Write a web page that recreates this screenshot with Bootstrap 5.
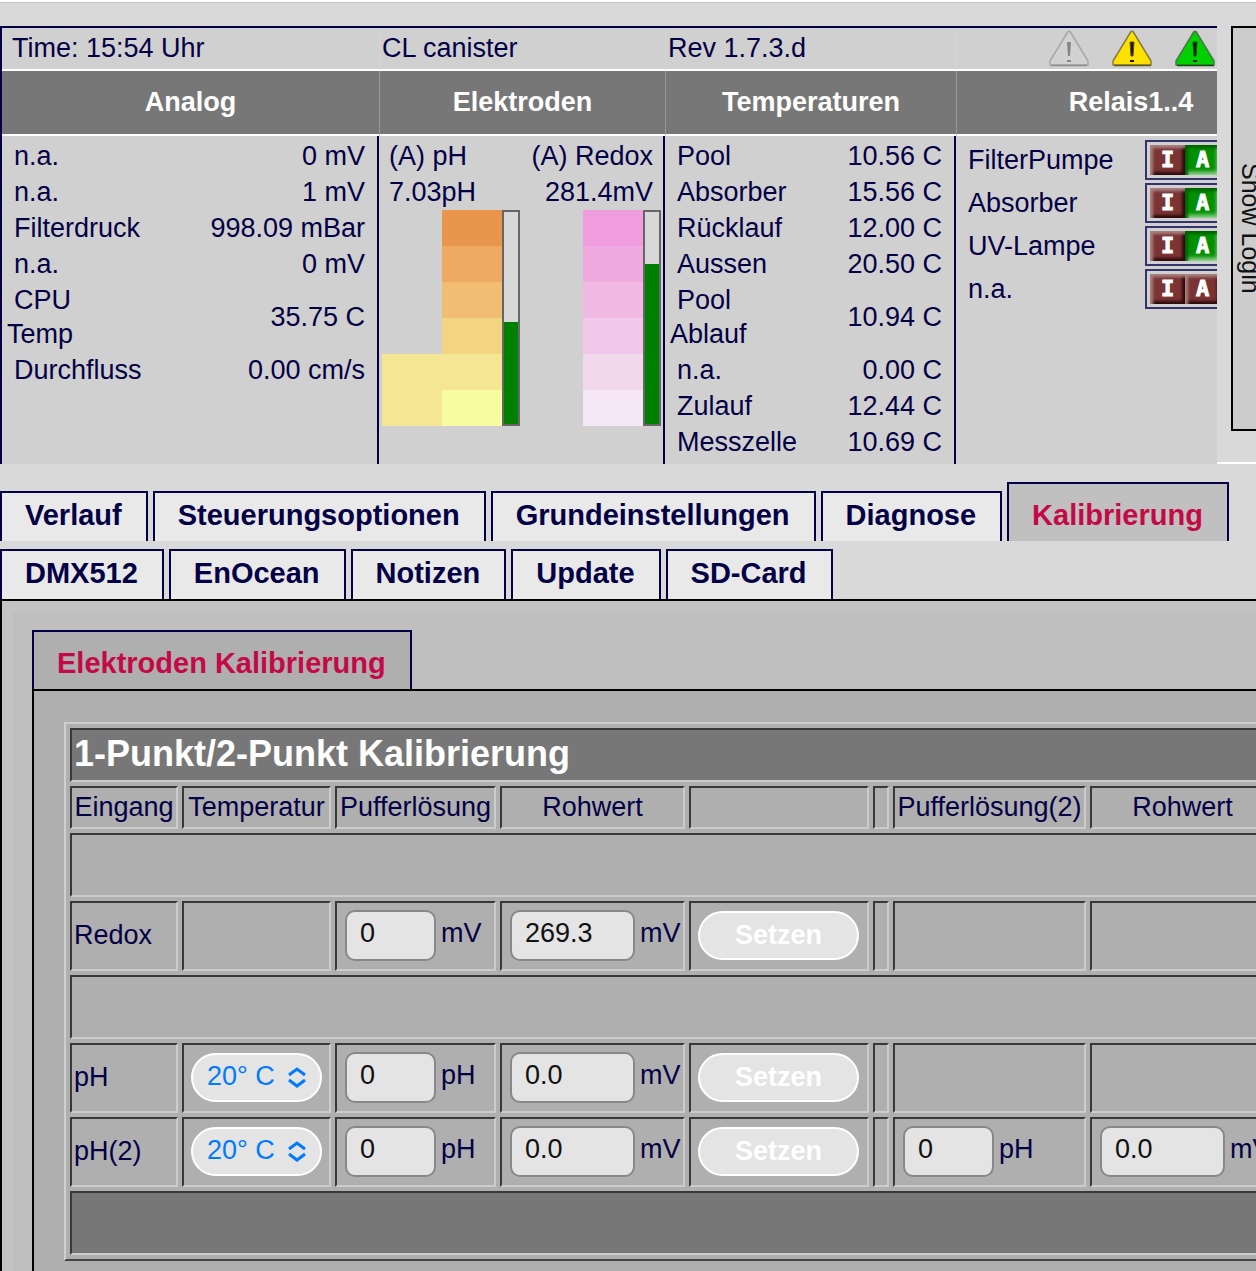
<!DOCTYPE html>
<html lang="de">
<head>
<meta charset="utf-8">
<meta name="viewport" content="width=device-width, initial-scale=1">
<title>Kalibrierung</title>
<link href="https://cdn.jsdelivr.net/npm/bootstrap@5.3.0/dist/css/bootstrap.min.css" rel="stylesheet">
<style>
  :root { --navy: #040045; --crimson: #c40a46; --head: #777; }
  body { background: #d9d9d9; color: var(--navy); font: 27px/36px "Liberation Sans", Arial, sans-serif; overflow-x: hidden; border-top: 2px solid #fff; min-height: 100vh; }
  .topline { border-top: 1px solid #c4c4c4; padding-top: 23px; }
  table { border-collapse: separate; }

  /* status overview */
  .status-wrap { min-width: 0; }
  .status { table-layout: fixed; width: 1307px; border-spacing: 0; background: #d0d0d0; border: 2px solid var(--navy); border-bottom: 0; }
  .status > * > tr > * { padding: 0; vertical-align: top; }
  .status .info td { height: 43px; line-height: 41px; border-bottom: 2px solid #fff; }
  .status .info td + td { border-left: 1px solid #d6d6d6; padding-left: 2px; }
  .status .info td:first-child { padding-left: 10px; }
  .status .titles th { height: 65px; line-height: 62px; text-align: center; color: #fff; background: var(--head); border-bottom: 2px solid #fff; }
  .status .titles th + th { border-left: 1px solid #999; }
  .status .panels > td { height: 328px; border-right: 2px solid var(--navy); }
  .warn-icons { padding: 2px 0 0 90px; gap: 23px; }
  .values { width: 100%; border-spacing: 0; margin-top: 2px; }
  .values th { font-weight: 400; text-indent: 7px; padding: 0 0 0 5px; }
  .values td { text-align: right; padding: 0 12px 0 0; white-space: nowrap; }
  .values .two-line th { line-height: 34px; padding-top: 1px; padding-bottom: 1px; }
  .electrode-text { padding: 2px 10px 0; }
  .electrode-bars { padding: 0 2px 0 3px; }
  .electrode { height: 216px; }
  .scale { width: 60px; }
  .scale > div { height: 36px; }
  .scale.active-band { background: #f5e693; }
  .meter { width: 18px; border: 2px solid #666; display: flex; align-items: flex-end; background: #d8d8d8; }
  .meter > div { width: 100%; background: #008000; }

  .relay { height: 43px; padding: 5px 0 0 12px; }
  .relay-box { border: 2px solid #34346a; background: #d0d0d0; padding: 3px; height: 40px; width: 80px; }
  .relay-name { width: 177px; }
  .relay-box button { width: 35px; border: 0; padding: 0; color: #fff; background: #7b3333; font: 700 22px/30px "DejaVu Sans Mono", monospace; -webkit-text-stroke: 1px #fff; box-shadow: inset 3px 3px 3px #a98080, inset -3px -3px 3px #2e0b0b; }
  .relay-box button.on { background: #009000; box-shadow: inset 3px 3px 3px #006200, inset -3px -3px 4px #9bd69b; }

  .login-gap { width: 14px; border-bottom: 2px solid #fff; }
  .login-col { width: 25px; border-bottom: 2px solid #fff; }
  .login-btn { width: 40px; height: 405px; padding: 0; border: 2px solid #000; background: #ccc; color: #111; writing-mode: vertical-rl; font-size: 25px; line-height: 30px; text-align: center; }

  /* tabs */
  .tabs { gap: 8px 5px; margin-top: 18px; }
  .tab-item { display: block; border: 2px solid var(--navy); border-bottom: 0; background: #e9e9e9; color: var(--navy); font-weight: 700; font-size: 29px; line-height: 34px; padding: 5px 24px 9px 23px; text-decoration: none; }
  .tab-item.current { padding-top: 14px; background: #c0c0c0; color: var(--crimson); }
  .tab-item.current.inner { background: #afafaf; }
  .pane-outer { border: 2px solid #000; border-width: 2px 0 0 2px; background: #c3c3c3; padding: 11px 0 0 11px; }
  .pane-mid { background: #bfbfbf; padding: 18px 0 0 19px; }
  .pane-inner { border: 2px solid #000; border-width: 2px 0 0 2px; background: #afafaf; padding: 31px 0 31px 30px; }

  /* calibration grid */
  .calib { table-layout: fixed; width: 1401px; border-spacing: 4px; border: 2px solid; border-color: #cfcfcf #444 #444 #cfcfcf; }
  .calib th, .calib td { border: 2px solid; border-color: #383838 #ccc #ccc #383838; padding: 0 2px 2px; height: 70px; white-space: nowrap; font-weight: 400; vertical-align: middle; }
  .calib .names th { height: 43px; text-align: center; }
  .calib .gap-row td { height: 64px; }
  .calib .caption-row th { height: 54px; background: var(--head); color: #fff; font-weight: 700; font-size: 36px; }
  .calib .foot-row td { height: 64px; background: var(--head); }
  .calib .field { padding-left: 8px; }
  .num { width: 91px; height: 51px; border: 2px solid #88888c; border-radius: 10px; background: #e4e4e4; color: #111; padding: 0 0 4px 13px; }
  .num.wide { width: 125px; }
  .unit { margin-left: 5px; padding-bottom: 4px; }
  .set-btn { width: 161px; height: 49px; border: 2px solid #fff; border-radius: 25px; background: #e4e4e4; color: #fff; font-weight: 700; display: block; margin-left: -1px; }
  .temp-select { appearance: none; width: 131px; height: 49px; border: 2px solid #fff; border-radius: 25px; background: #e4e4e4; color: #007aff; padding: 0 0 2px 14px; }
  .temp-pick { width: 131px; margin-left: -1px; }
  .temp-pick svg { position: absolute; right: 15px; top: 13px; pointer-events: none; }
</style>
</head>
<body>
<div class="topline">
  <header class="d-flex">
    <div class="status-wrap flex-grow-1 overflow-hidden">
      <table class="status">
        <colgroup><col style="width:377px"><col style="width:286px"><col style="width:291px"><col></colgroup>
        <tbody>
        <tr class="info">
          <td>Time: 15:54 Uhr</td>
          <td>CL canister</td>
          <td>Rev 1.7.3.d</td>
          <td>
            <div class="d-flex warn-icons">
              <svg width="40" height="37" viewBox="0 0 40 37" aria-label="Aus"><path d="M19 1.500h2L39 31v4H1v-4z" fill="#d2d2d2" stroke="#a8a8a8" stroke-width="1.500" stroke-linejoin="round"/><path d="M2 35.500h36" stroke="#8e8e8e" stroke-width="1.500"/><path d="M18 12h4l-1 14h-2z" fill="#858585"/><rect x="18" y="30" width="4" height="2" fill="#858585"/></svg>
              <svg width="40" height="37" viewBox="0 0 40 37" aria-label="Warnung"><path d="M19 1.500h2L39 31v4H1v-4z" fill="#ffe100" stroke="#847b45" stroke-width="1.500" stroke-linejoin="round"/><path d="M2 35.500h37" stroke="#5f5820" stroke-width="1.500"/><path d="M18 12h4l-1 14h-2z" fill="#171400" stroke="#5c5200" stroke-width="1"/><rect x="18" y="30" width="4" height="2" fill="#171400"/></svg>
              <svg width="40" height="37" viewBox="0 0 40 37" aria-label="OK"><path d="M19 1.500h2L39 31v4H1v-4z" fill="#00cf00" stroke="#4d774d" stroke-width="1.500" stroke-linejoin="round"/><path d="M2 35.500h37" stroke="#075607" stroke-width="1.500"/><path d="M18 12h4l-1 14h-2z" fill="#001c00" stroke="#005200" stroke-width="1"/><rect x="18" y="30" width="4" height="2" fill="#001c00"/></svg>
            </div>
          </td>
        </tr>
        <tr class="titles"><th>Analog</th><th>Elektroden</th><th>Temperaturen</th><th>Relais1..4</th></tr>
        <tr class="panels">
          <td>
            <table class="values">
              <tr><th>n.a.</th><td>0 mV</td></tr>
              <tr><th>n.a.</th><td>1 mV</td></tr>
              <tr><th>Filterdruck</th><td>998.09 mBar</td></tr>
              <tr><th>n.a.</th><td>0 mV</td></tr>
              <tr class="two-line"><th>CPU<br>Temp</th><td>35.75 C</td></tr>
              <tr><th>Durchfluss</th><td>0.00 cm/s</td></tr>
            </table>
          </td>
          <td>
            <div class="electrode-text d-flex justify-content-between">
              <div>(A) pH<br>7.03pH</div>
              <div class="text-end">(A) Redox<br>281.4mV</div>
            </div>
            <div class="electrode-bars d-flex justify-content-between">
              <div class="d-flex electrode">
                <div class="scale active-band align-self-end"><div></div><div></div></div>
                <div class="scale">
                  <div style="background:#ea954e"></div><div style="background:#edaa60"></div><div style="background:#f1bd72"></div><div style="background:#f3d480"></div><div style="background:#f5e693"></div><div style="background:#f8fca0"></div>
                </div>
                <div class="meter"><div style="height:48%"></div></div>
              </div>
              <div class="d-flex electrode">
                <div class="scale">
                  <div style="background:#f09ddf"></div><div style="background:#efabe0"></div><div style="background:#f0b9e4"></div><div style="background:#f2c8ea"></div><div style="background:#f2d8ec"></div><div style="background:#f5e7f5"></div>
                </div>
                <div class="meter"><div style="height:75.5%"></div></div>
              </div>
            </div>
          </td>
          <td>
            <table class="values">
              <tr><th>Pool</th><td>10.56 C</td></tr>
              <tr><th>Absorber</th><td>15.56 C</td></tr>
              <tr><th>Rücklauf</th><td>12.00 C</td></tr>
              <tr><th>Aussen</th><td>20.50 C</td></tr>
              <tr class="two-line"><th>Pool<br>Ablauf</th><td>10.94 C</td></tr>
              <tr><th>n.a.</th><td>0.00 C</td></tr>
              <tr><th>Zulauf</th><td>12.44 C</td></tr>
              <tr><th>Messzelle</th><td>10.69 C</td></tr>
            </table>
          </td>
          <td>
            <div class="relay d-flex align-items-center"><span class="relay-name">FilterPumpe</span><div class="relay-box d-flex"><button type="button">I</button><button type="button" class="on">A</button></div></div>
            <div class="relay d-flex align-items-center"><span class="relay-name">Absorber</span><div class="relay-box d-flex"><button type="button">I</button><button type="button" class="on">A</button></div></div>
            <div class="relay d-flex align-items-center"><span class="relay-name">UV-Lampe</span><div class="relay-box d-flex"><button type="button">I</button><button type="button" class="on">A</button></div></div>
            <div class="relay d-flex align-items-center"><span class="relay-name">n.a.</span><div class="relay-box d-flex"><button type="button">I</button><button type="button">A</button></div></div>
          </td>
        </tr>
        </tbody>
      </table>
    </div>
    <div class="flex-shrink-0 d-flex">
      <div class="login-gap"></div>
      <div class="login-col"><button type="button" class="login-btn">Show Login</button></div>
    </div>
  </header>

  <nav class="tabs d-flex flex-wrap align-items-end">
    <a class="tab-item" href="#">Verlauf</a>
    <a class="tab-item" href="#">Steuerungsoptionen</a>
    <a class="tab-item" href="#">Grundeinstellungen</a>
    <a class="tab-item" href="#">Diagnose</a>
    <a class="tab-item current" href="#" aria-current="page">Kalibrierung</a>
    <a class="tab-item" href="#">DMX512</a>
    <a class="tab-item" href="#">EnOcean</a>
    <a class="tab-item" href="#">Notizen</a>
    <a class="tab-item" href="#">Update</a>
    <a class="tab-item" href="#">SD-Card</a>
  </nav>

  <main class="pane-outer">
    <div class="pane-mid">
      <nav class="d-flex"><a class="tab-item current inner" href="#">Elektroden Kalibrierung</a></nav>
      <section class="pane-inner overflow-hidden">
        <table class="calib">
          <colgroup><col style="width:108px"><col style="width:149px"><col style="width:161px"><col style="width:185px"><col style="width:180px"><col style="width:16px"><col style="width:193px"><col style="width:185px"><col style="width:180px"></colgroup>
          <tbody>
          <tr class="caption-row"><th colspan="9">1-Punkt/2-Punkt Kalibrierung</th></tr>
          <tr class="names"><th>Eingang</th><th>Temperatur</th><th>Pufferlösung</th><th>Rohwert</th><th></th><th></th><th>Pufferlösung(2)</th><th>Rohwert</th><th></th></tr>
          <tr class="gap-row"><td colspan="9"></td></tr>
          <tr>
            <th>Redox</th><td></td>
            <td class="field"><div class="d-flex align-items-center"><input class="num" id="rx-buf" value="0"><label class="unit" for="rx-buf">mV</label></div></td>
            <td class="field"><div class="d-flex align-items-center"><input class="num wide" id="rx-raw" value="269.3"><label class="unit" for="rx-raw">mV</label></div></td>
            <td class="field"><button type="button" class="set-btn">Setzen</button></td>
            <td></td><td></td><td></td><td></td>
          </tr>
          <tr class="gap-row"><td colspan="9"></td></tr>
          <tr>
            <th>pH</th>
            <td class="field"><div class="temp-pick position-relative d-flex"><select class="temp-select" aria-label="Temperatur pH"><option>20° C</option></select><svg width="20" height="22" viewBox="0 0 20 22" fill="none" stroke="#007aff" stroke-width="3"><path d="M2 9l8-6 8 6M2 14l8 6 8-6"/></svg></div></td>
            <td class="field"><div class="d-flex align-items-center"><input class="num" id="ph-buf" value="0"><label class="unit" for="ph-buf">pH</label></div></td>
            <td class="field"><div class="d-flex align-items-center"><input class="num wide" id="ph-raw" value="0.0"><label class="unit" for="ph-raw">mV</label></div></td>
            <td class="field"><button type="button" class="set-btn">Setzen</button></td>
            <td></td><td></td><td></td><td></td>
          </tr>
          <tr>
            <th>pH(2)</th>
            <td class="field"><div class="temp-pick position-relative d-flex"><select class="temp-select" aria-label="Temperatur pH(2)"><option>20° C</option></select><svg width="20" height="22" viewBox="0 0 20 22" fill="none" stroke="#007aff" stroke-width="3"><path d="M2 9l8-6 8 6M2 14l8 6 8-6"/></svg></div></td>
            <td class="field"><div class="d-flex align-items-center"><input class="num" id="ph2-buf" value="0"><label class="unit" for="ph2-buf">pH</label></div></td>
            <td class="field"><div class="d-flex align-items-center"><input class="num wide" id="ph2-raw" value="0.0"><label class="unit" for="ph2-raw">mV</label></div></td>
            <td class="field"><button type="button" class="set-btn">Setzen</button></td>
            <td></td>
            <td class="field"><div class="d-flex align-items-center"><input class="num" id="ph2-buf2" value="0"><label class="unit" for="ph2-buf2">pH</label></div></td>
            <td class="field"><div class="d-flex align-items-center"><input class="num wide" id="ph2-raw2" value="0.0"><label class="unit" for="ph2-raw2">mV</label></div></td>
            <td></td>
          </tr>
          <tr class="foot-row"><td colspan="9"></td></tr>
          </tbody>
        </table>
      </section>
    </div>
  </main>
</div>
<script src="https://cdn.jsdelivr.net/npm/bootstrap@5.3.0/dist/js/bootstrap.bundle.min.js"></script>
</body>
</html>
